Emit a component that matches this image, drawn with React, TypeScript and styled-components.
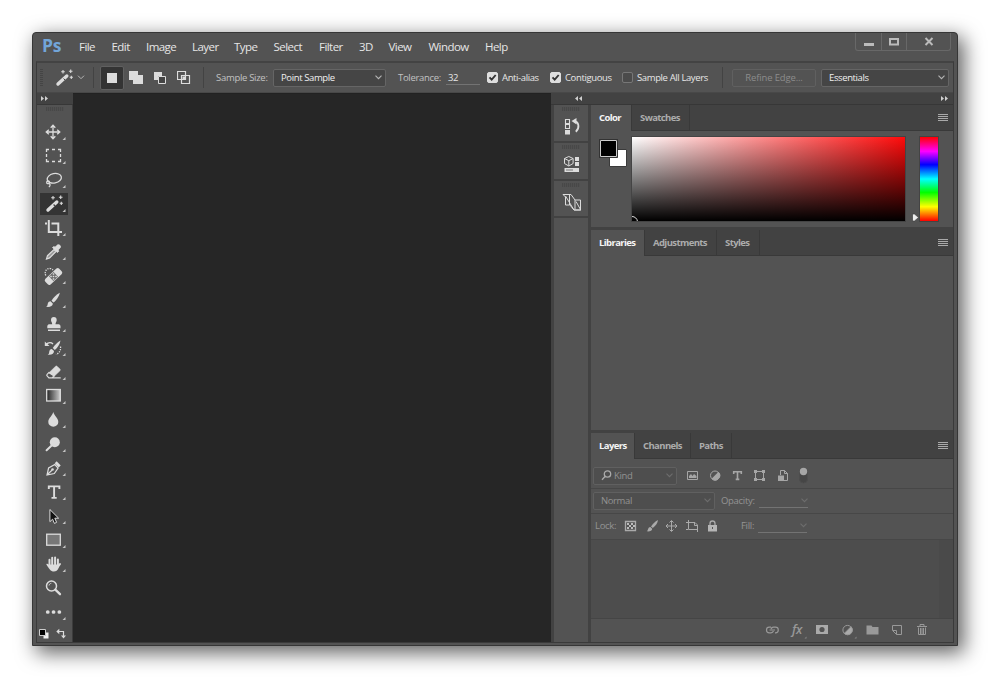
import type { ReactNode } from "react";
import { styled, createGlobalStyle } from "styled-components";

const GlobalStyle = createGlobalStyle`
  * {
    box-sizing: border-box;
  }
  body {
    margin: 0;
    background: #fff;
    font-family: "Open Sans", "Noto Sans", sans-serif;
    font-size: 9.5px;
    font-weight: 500;
    letter-spacing: -0.38px;
    color: #e6e6e6;
    overflow: hidden;
  }
  svg {
    display: block;
    flex: none;
  }
`;

const Page = styled.div`
  width: 990px;
  height: 678px;
  padding: 32px 0 0 32px;
`;

const Window = styled.div`
  display: flex;
  flex-direction: column;
  width: 926px;
  height: 614px;
  padding: 0 3px 2px;
  background: #535353;
  border: 1px solid #363636;
  border-radius: 4px 4px 0 0;
  box-shadow: 5px 6px 20px 1px rgba(0, 0, 0, 0.62);
`;

const MenuBar = styled.div`
  display: flex;
  height: 28px;
  padding-left: 6px;
`;

const Logo = styled.div`
  width: 37px;
  font-size: 17.5px;
  font-weight: 700;
  line-height: 25px;
  letter-spacing: -0.3px;
  color: #72a5d8;
`;

const MenuItem = styled.div<{ $width: number }>`
  width: ${({ $width }) => $width}px;
  font-size: 11.5px;
  line-height: 28px;
  letter-spacing: -0.55px;
  white-space: nowrap;
`;

const WindowButtons = styled.div`
  display: flex;
  height: 18px;
  margin-left: auto;
  margin-right: 3px;
  border: 1px solid #686868;
  border-top: 0;
  border-radius: 0 0 3px 3px;
`;

const WindowButton = styled.div<{ $width: number }>`
  display: flex;
  justify-content: center;
  width: ${({ $width }) => $width}px;
  & + & {
    border-left: 1px solid #686868;
  }
`;

const Frame = styled.div`
  display: flex;
  flex-direction: column;
  flex: 1;
  border: 1px solid #3a3a3a;
  border-top: 2px solid #434343;
`;

const OptionsBar = styled.div`
  display: flex;
  align-items: center;
  height: 30px;
  padding-left: 3px;
  border-bottom: 1px solid #484848;
  white-space: nowrap;
`;

const Grip = styled.div`
  width: 3px;
  height: 18px;
  background: repeating-linear-gradient(#454545 0 1px, #535353 1px 2px);
`;

const Separator = styled.div<{ $left: number }>`
  width: 1px;
  height: 21px;
  margin-left: ${({ $left }) => $left}px;
  background: #434343;
`;

const Gap = styled.div<{ $width: number }>`
  width: ${({ $width }) => $width}px;
`;

const WandPreset = styled.div`
  display: flex;
  align-items: center;
  margin-left: 5px;
  svg + svg {
    margin-left: -3px;
  }
`;

const ModeButton = styled.div<{ $active?: boolean }>`
  display: grid;
  place-items: center;
  width: 24px;
  height: 24px;
  border-radius: 2px;
  border: 1px solid ${({ $active }) => ($active ? "#606060" : "transparent")};
  background: ${({ $active }) => ($active ? "#343434" : "transparent")};
`;

const Label = styled.div<{ $width: number; $dim?: boolean }>`
  width: ${({ $width }) => $width}px;
  letter-spacing: -0.3px;
  color: ${({ $dim }) => ($dim ? "#949494" : "#c2c2c2")};
  white-space: nowrap;
`;

const Select = styled.div<{ $width: number; $dim?: boolean }>`
  display: flex;
  align-items: center;
  justify-content: space-between;
  flex: none;
  width: ${({ $width }) => $width}px;
  height: 18px;
  padding: 0 3px 0 7px;
  border: 1px solid ${({ $dim }) => ($dim ? "#606060" : "#656565")};
  border-radius: 2px;
  background: ${({ $dim }) => ($dim ? "#4e4e4e" : "#454545")};
  color: ${({ $dim }) => ($dim ? "#929292" : "#f0f0f0")};
`;

const FilterKind = styled.span`
  margin-left: 2px;
  margin-right: auto;
`;

const NumberField = styled.div<{ $width: number }>`
  display: flex;
  align-items: center;
  justify-content: flex-end;
  width: ${({ $width }) => $width}px;
  height: 15px;
  border-bottom: 1px solid #737373;
`;

const Value = styled.span`
  margin-right: auto;
  padding-left: 2px;
`;

const Check = styled.div<{ $width: number }>`
  display: flex;
  align-items: center;
  gap: 4px;
  width: ${({ $width }) => $width}px;
`;

const CheckBox = styled.div<{ $checked?: boolean }>`
  flex: none;
  width: 11px;
  height: 11px;
  margin-top: -1px;
  border-radius: 2px;
  border: 1px solid ${({ $checked }) => ($checked ? "#dedede" : "#777")};
  background: ${({ $checked }) => ($checked ? "#dedede" : "#4b4b4b")};
`;

const RefineButton = styled.div`
  width: 84px;
  height: 18px;
  margin-left: 9px;
  margin-right: 5px;
  border: 1px solid #606060;
  border-radius: 2px;
  line-height: 16px;
  letter-spacing: -0.15px;
  text-align: center;
  color: #8c8c8c;
`;

const Workspace = styled.div`
  display: grid;
  grid-template-columns: 36px 478px 1fr;
  flex: 1;
`;

const Column = styled.div`
  display: flex;
  flex-direction: column;
  min-width: 0;
`;

const Canvas = styled.div`
  background: #262626;
  border-top: 1px solid #222;
`;

const CollapseBar = styled.div<{ $pad: string }>`
  display: flex;
  justify-content: space-between;
  align-items: center;
  height: 12px;
  padding: ${({ $pad }) => $pad};
  background: #424242;
  border-bottom: 1px solid #373737;
`;

const ToolBox = styled.div`
  display: flex;
  flex-direction: column;
  flex: 1;
  width: 35px;
  padding-left: 1px;
  box-shadow: 1px 0 0 #3c3c3c;
`;

const DotGrip = styled.div`
  width: 18px;
  height: 4px;
  margin: 2px auto 0;
  background: repeating-linear-gradient(90deg, #484848 0 1px, #505050 1px 2px);
`;

const Tool = styled.div<{ $active?: boolean }>`
  width: 32px;
  height: 24px;
  ${({ $active }) => $active && "background: linear-gradient(#343434, #343434) 2px 1px / 28px 22px no-repeat;"}
`;

const ToolList = styled.div`
  margin-top: 9px;
`;

const Dock = styled.div`
  display: flex;
  flex: 1;
  background: #424242;
`;

const IconStrip = styled.div`
  display: flex;
  flex-direction: column;
  gap: 2px;
  width: 34px;
  margin: 0 3px;
`;

const StripCell = styled.div<{ $height?: number }>`
  height: ${({ $height }) => ($height ? `${$height}px` : "auto")};
  flex: ${({ $height }) => ($height ? "none" : 1)};
  background: #535353;
`;

const Panels = styled.div`
  display: flex;
  flex-direction: column;
  gap: 3px;
  flex: 1;
`;

const Panel = styled.div<{ $height?: number }>`
  display: flex;
  flex-direction: column;
  height: ${({ $height }) => ($height ? `${$height}px` : "auto")};
  flex: ${({ $height }) => ($height ? "none" : 1)};
  background: #535353;
`;

const TabBar = styled.div`
  display: flex;
  align-items: stretch;
  height: 26px;
  background: #424242;
`;

const Tab = styled.div<{ $width: number; $active?: boolean }>`
  width: ${({ $width }) => $width}px;
  padding-left: 8px;
  border-right: 1px solid #393939;
  border-bottom: ${({ $active }) => ($active ? "0" : "1px solid #393939")};
  background: ${({ $active }) => ($active ? "#535353" : "transparent")};
  color: ${({ $active }) => ($active ? "#f5f5f5" : "#acacac")};
  font-weight: 700;
  letter-spacing: -0.6px;
  line-height: 25px;
  white-space: nowrap;
`;

const TabFill = styled.div`
  display: flex;
  justify-content: flex-end;
  align-items: center;
  flex: 1;
  padding-right: 5px;
  border-bottom: 1px solid #393939;
`;

const ColorBody = styled.div`
  display: flex;
  padding: 5px 0 0 8px;
`;

const Swatches = styled.div`
  width: 32px;
  padding-top: 3px;
`;

const ColorField = styled.div`
  width: 275px;
  height: 86px;
  border: 1px solid #444;
  background:
    linear-gradient(to top, #000, transparent),
    linear-gradient(to right, #fff, #ff0b0b);
  overflow: hidden;
`;

const HueSlider = styled.div`
  display: flex;
  align-items: flex-end;
  margin-left: 5px;
`;

const HueBar = styled.div`
  width: 20px;
  height: 86px;
  border: 1px solid #444;
  background: linear-gradient(#f00, #f0f 17%, #00f 33%, #0ff 50%, #0f0 66%, #ff0 83%, #f00);
`;

const Row = styled.div<{ $height: number; $shift: number }>`
  display: flex;
  align-items: center;
  height: ${({ $height }) => $height}px;
  padding-left: 2px;
  padding-top: ${({ $shift }) => Math.max($shift, 0)}px;
  padding-bottom: ${({ $shift }) => Math.max(-$shift, 0)}px;
  border-bottom: 1px solid #474747;
`;

const LayerList = styled.div`
  display: flex;
  justify-content: flex-end;
  flex: 1;
  background: #4d4d4d;
  border-bottom: 1px solid #454545;
`;

const ScrollTrack = styled.div`
  width: 14px;
  background: #4a4a4a;
`;

const PanelFooter = styled.div`
  height: 23px;
`;

const menus: [string, number][] = [
  ["File", 32.5],
  ["Edit", 34.5],
  ["Image", 46],
  ["Layer", 42],
  ["Type", 39.5],
  ["Select", 45.5],
  ["Filter", 40],
  ["3D", 29.5],
  ["View", 40],
  ["Window", 56.5],
  ["Help", 40],
];

const light = "#dcdcdc";
const dim = "#a6a6a6";

const tools: ReactNode[] = [
  // move
  <path d="M15 6v12M9 12h12M12.700 7.800L15 5.200l2.300 2.600M12.700 16.200L15 18.800l2.300-2.600M10.800 9.700L8.200 12l2.600 2.300M19.200 9.700l2.600 2.300-2.600 2.300" />,
  // marquee
  <path d="M8.500 8V5.500H11M14 5.500h3M20 5.500h2.500V8M22.500 10v3M22.500 15v2.500H20M17 17.500h-3M11 17.500H8.500V15M8.500 13v-3" />,
  // lasso
  <>
    <ellipse cx="16.300" cy="10.300" rx="7.200" ry="4.700" transform="rotate(-12 16.300 10.300)" />
    <path d="M10 13c-2 .5-1.600 3 .3 2.600 2-.4 1.500-2.600-.3-2.600M11.300 15.500c1.200 1 1 2.500-.5 3.500" />
  </>,
  // magic wand
  <>
    <path d="M10 18L18.800 10" strokeWidth="3.400" strokeLinecap="round" />
    <path d="M15.600 12.500l1.500 1.600" stroke="#444" />
    <path d="M15 4v3.600M13.200 5.800h3.600M22.700 3.500v3.600M20.900 5.300h3.600M23.300 9.700v3.200M21.700 11.300h3.200" strokeWidth="1.100" />
  </>,
  // crop
  <path d="M7 7.500h2M10.800 4v12H24M13.500 7.500h6.800V20" strokeWidth="2" />,
  // eyedropper
  <>
    <path d="M8.500 19l1-3.300 6.500-6.200 2 2-6.400 6.400z" fill="#999" strokeWidth="1.200" />
    <path d="M14.500 7.500l1.500-1 1 .8 2-2c1.200-1 3-.4 3.400.8.300.8 0 1.700-.6 2.200L20 10l.8 1.200-1.400 1.400z" fill={light} strokeWidth=".8" />
  </>,
  // healing brush
  <>
    <rect x="6" y="8.700" width="19" height="7.600" rx="2" fill={light} stroke="none" transform="rotate(-43 15.500 12.500)" />
    <rect x="12.300" y="9.300" width="6.400" height="6.400" fill="#666" stroke="none" transform="rotate(-43 15.500 12.500)" />
    <path d="M15.500 9.200v1.600M15.500 14.200v1.600M12.200 12.500h1.600M17.200 12.500h1.600M14.700 12.500h1.600" strokeWidth="1.600" />
    <path d="M7.800 11.500C6 8 8.500 4 12 4.500c1.500 0 2.500.8 3 1.500" strokeDasharray="1.300 1.100" />
  </>,
  // brush
  <>
    <path d="M21.800 4.700c-3 1.600-6.800 5.200-8.300 8l2 1.900c2.600-2 5.800-6.500 6.300-9.900z" fill={light} stroke="none" />
    <path d="M12.500 13.300l2.300 2.200c.2 2.700-3 3.900-6.800 3.300 1.900-.8 1.400-2.300 2-3.800.4-1 1.400-1.700 2.500-1.700z" fill={light} stroke="none" />
  </>,
  // stamp
  <path
    d="M15.800 5a3 3 0 0 1 2.900 3c0 1.800-1.200 2.400-1.200 4.200h3.700l1.300 1.500v2.600H9.300v-2.600l1.300-1.500h3.600c0-1.800-1.200-2.400-1.200-4.200a3 3 0 0 1 2.800-3zM10 17.500h12v1.600H10z"
    fill={light}
    stroke="none"
  />,
  // history brush
  <>
    <path d="M22.500 4.500c-3 1.600-6.300 5-7.700 7.600l2 1.900c2.600-2 5.200-6.100 5.700-9.500z" fill={light} stroke="none" />
    <path d="M13.800 12.900l2.200 2.200c.2 2.700-2.500 4.200-6.300 3.600 1.900-.8 1.200-2.600 1.800-4 .4-1 1.200-1.800 2.300-1.800z" fill={light} stroke="none" />
    <path d="M8 8.500c2.500-2.500 5.500-2 7-.5" />
    <path d="M6.800 5.500V10h4.700z" fill={light} stroke="none" />
    <path d="M22.500 10.500c.5 3.500-1 6.500-4.500 8" strokeDasharray="1.300 1.100" />
  </>,
  // eraser
  <>
    <path d="M11 12.700l6.500-6.300c.6-.5 1.200-.5 1.700 0l2.700 2.700c.5.600.5 1.100 0 1.700l-5.500 5.200z" fill={light} strokeWidth=".6" />
    <path d="M10.800 12.600l-1.700 1.800c-.5.500-.5 1 0 1.500l1.800 1.900h3.300l2-1.900zM13 17.900h9.700" strokeWidth="1.200" />
  </>,
  // gradient
  <rect x="8.700" y="5.500" width="13.600" height="11.500" fill="url(#toolGradient)" strokeWidth="1.300" />,
  // blur
  <path d="M15.300 4c.8 3.400 5 6.400 5 9.900a5 4.900 0 0 1-10 0c0-3.500 4.200-6.500 5-9.900z" fill={light} stroke="none" />,
  // dodge
  <>
    <circle cx="16.800" cy="10.300" r="5" fill={light} stroke="none" />
    <path d="M8.600 18.300l5-4.700" strokeWidth="2" strokeLinecap="round" />
  </>,
  // pen
  <>
    <path d="M9 19l1.600-7 6.200-3.500 3.300 3.500-3.800 5.500zM9.200 18.800l4.700-4.600" strokeWidth="1.200" />
    <circle cx="14.500" cy="13.500" r="1.300" fill={light} stroke="none" />
    <path d="M16.700 7.300l2-2 4 4.200-2 2z" fill={light} stroke="none" />
  </>,
  // type
  <path d="M10.800 9V6.400h10.600V9M16.100 6.500v11.300M13.500 17.900h5.200" strokeWidth="1.900" />,
  // path selection
  <path d="M11.900 5.500v12.200l2.700-2.500 1.800 4.200 2.200-1-1.800-4.200h3.800z" fill="#111" strokeWidth="1" />,
  // rectangle
  <rect x="8.700" y="6.200" width="13.600" height="11" fill="#777" strokeWidth="1.300" />,
  // hand
  <>
    <path d="M11.500 14V7.700M14.200 12.500V5.700M17.100 12.500V5.500M19.900 14V7.500" strokeWidth="2" strokeLinecap="round" />
    <path d="M8.300 12.200c.7-.8 1.600-.5 2.200.4l.7-.1h9.800c0 4-1.500 7-5 7s-4.900-2.700-7.700-7.300z" fill={light} stroke="none" />
    <path d="M19.500 15.500l2.500-3.500" strokeWidth="2" strokeLinecap="round" />
  </>,
  // zoom
  <>
    <circle cx="13.500" cy="10" r="5" strokeWidth="1.500" />
    <path d="M17.300 13.700l4.700 4.500" strokeWidth="2.300" strokeLinecap="round" />
    <path d="M11 9.500c.3-1.200 1-2 2.300-2.200" strokeWidth=".9" />
  </>,
  // more
  <path d="M9.700 12h.1M15.500 12h.1M21.300 12h.1" strokeWidth="3.700" strokeLinecap="round" />,
];

function Chevron({ color = "#b5b5b5" }: { color?: string }) {
  return (
    <svg width="7" height="5" fill="none" stroke={color} strokeWidth="1.100">
      <path d="M.5 .7l3 3 3-3" />
    </svg>
  );
}

function Arrows({ left }: { left?: boolean }) {
  return (
    <svg width="7" height="5" fill="#d0d0d0">
      {left ? <path d="M3 0v5L0 2.500zM7 0v5L4 2.500z" /> : <path d="M0 0v5l3-2.500zM4 0v5l3-2.500z" />}
    </svg>
  );
}

function Tabs({ items }: { items: [string, number][] }) {
  return (
    <TabBar>
      {items.map(([name, width], index) => (
        <Tab key={name} $width={width} $active={index === 0}>
          {name}
        </Tab>
      ))}
      <TabFill>
        <svg width="10" height="8" stroke="#aaa">
          <path d="M0 .5h10M0 2.500h10M0 4.500h10M0 6.500h10" />
        </svg>
      </TabFill>
    </TabBar>
  );
}

function CheckOption({ text, width, checked }: { text: string; width: number; checked?: boolean }) {
  return (
    <Check $width={width}>
      <CheckBox $checked={checked}>
        {checked && (
          <svg width="9" height="9" fill="none" stroke="#333" strokeWidth="1.900">
            <path d="M1.500 4.300l2.200 2.300 4-4.600" />
          </svg>
        )}
      </CheckBox>
      {text}
    </Check>
  );
}

function Toolbar() {
  return (
    <OptionsBar>
      <Grip />
      <WandPreset>
        <svg width="32" height="24" viewBox="0 0 32 24" fill="none" stroke={light}>
          {tools[3]}
        </svg>
        <svg width="8" height="5" fill="none" stroke="#b5b5b5">
          <path d="M1 .7l3 3 3-3" />
        </svg>
      </WandPreset>
      <Separator $left={8} />
      <Gap $width={6} />
      <ModeButton $active>
        <svg width="10" height="10">
          <path fill={light} d="M0 0h10v10H0z" />
        </svg>
      </ModeButton>
      <ModeButton>
        <svg width="14" height="13" fill={light}>
          <path d="M0 0h9v4h5v9H4V9H0z" />
        </svg>
      </ModeButton>
      <ModeButton>
        <svg width="12" height="12" fill="none" stroke={light}>
          <path d="M0 0h8v4H4v4H0z" fill={light} stroke="none" />
          <path d="M4.500 4.500h7v7h-7z" fill="#444" />
        </svg>
      </ModeButton>
      <ModeButton>
        <svg width="14" height="13" fill="none" stroke={light}>
          <path d="M.5 .5h8v8h-8zM4.500 4.500h8v8h-8z" strokeWidth="1.200" />
          <path d="M5.500 5.500h3v3h-3z" fill={light} stroke="none" />
        </svg>
      </ModeButton>
      <Separator $left={7} />
      <Gap $width={12} />
      <Label $width={57}>Sample Size:</Label>
      <Select $width={113}>
        Point Sample
        <Chevron />
      </Select>
      <Gap $width={12} />
      <Label $width={48}>Tolerance:</Label>
      <NumberField $width={34}>
        <Value>32</Value>
      </NumberField>
      <Gap $width={7} />
      <CheckOption text="Anti-alias" width={63} checked />
      <CheckOption text="Contiguous" width={72} checked />
      <CheckOption text="Sample All Layers" width={100} />
      <Separator $left={0} />
      <RefineButton>Refine Edge...</RefineButton>
      <Select $width={128}>
        Essentials
        <Chevron />
      </Select>
    </OptionsBar>
  );
}

function ToolPalette() {
  return (
    <Column>
      <CollapseBar $pad="0 0 0 4px">
        <Arrows />
      </CollapseBar>
      <ToolBox>
        <DotGrip />
        <ToolList>
          {tools.map((icon, index) => (
            <Tool key={index} $active={index === 3}>
              <svg width="32" height="24" viewBox="0 0 32 24" fill="none" stroke={light} strokeWidth="1.300">
                <defs>
                  <linearGradient id="toolGradient">
                    <stop stopColor="#222" />
                    <stop offset="1" stopColor="#ccc" />
                  </linearGradient>
                </defs>
                {icon}
                {index !== 19 && <path d="M27.500 17v3h-3z" fill="#c4c4c4" stroke="none" />}
              </svg>
            </Tool>
          ))}
        </ToolList>
        <svg width="32" height="17" fill="none">
          <path d="M5.500 8.500h5v6h-5z" fill="#eee" />
          <path d="M1.500 5.500h6v6h-6z" fill="#000" stroke="#ccc" />
          <path d="M21 7.500h4.500v5" stroke={light} strokeWidth="1.200" />
          <path d="M18.300 7.500l3-2.700v5.400zM23 11.500h5l-2.500 3z" fill={light} />
        </svg>
      </ToolBox>
    </Column>
  );
}

function Strip() {
  return (
    <IconStrip>
      <StripCell $height={36}>
        <DotGrip />
        <svg width="34" height="30" fill="none" stroke={light}>
          <path d="M11.500 8.500h4v4h-4zM11.500 13.500h4v4h-4z" strokeWidth="1.100" />
          <path d="M11 19h5v4.500h-5z" fill={light} stroke="none" />
          <path d="M20 10.500c5 0 6 6.500 1.800 10.200" strokeWidth="1.800" />
          <path d="M17.500 10L22.500 7v6.500z" fill={light} stroke="none" />
        </svg>
      </StripCell>
      <StripCell $height={36}>
        <DotGrip />
        <svg width="34" height="30" fill="none" stroke={light}>
          <path d="M10.500 9.500l4.300-2 4.300 2v5l-4.300 2.500-4.300-2.500zM10.500 9.500l4.300 2.200 4.300-2.200M14.800 11.700v5" />
          <path d="M21 8h4v4h-4zM21 13h4v4h-4zM10.500 19h14.500v4H10.500z" fill={light} stroke="none" />
          <path d="M12 21h7" stroke="#777" />
        </svg>
      </StripCell>
      <StripCell $height={35}>
        <DotGrip />
        <svg width="34" height="30" fill="none" stroke={light}>
          <path d="M9 7.500h8l4 5.500M9 7.500l2.500 2.500v8h4v-9.500M15.500 8v9.500M11.500 9l8.500 14h6.500V13h-5.500v9.500M22 14.500l4.500 8M15.500 17.500l4.500 5.500h7" strokeWidth="1" />
        </svg>
      </StripCell>
      <StripCell />
    </IconStrip>
  );
}

function ColorPanel() {
  return (
    <Panel $height={122}>
      <Tabs items={[["Color", 41], ["Swatches", 58]]} />
      <ColorBody>
        <Swatches>
          <svg width="29" height="30" fill="none">
            <path d="M10.500 10.500h17v17h-17z" fill="#fff" stroke="#3a3a3a" />
            <path d="M.5 .5h18v18H.5z" fill="#000" stroke="#333" />
            <path d="M1.500 1.500h16v16h-16z" stroke="#ccc" />
          </svg>
        </Swatches>
        <ColorField>
          <svg width="275" height="84" fill="none" stroke="#ddd">
            <path d="M0 79.500a5.500 5.500 0 0 1 5.500 5" />
          </svg>
        </ColorField>
        <HueSlider>
          <svg width="8" height="9">
            <path d="M1.500 1h2l4 3.500-4 3.500h-2z" fill="#eee" stroke="#444" strokeWidth=".7" />
          </svg>
          <HueBar />
        </HueSlider>
      </ColorBody>
    </Panel>
  );
}

function LayersPanel() {
  return (
    <Panel>
      <Tabs items={[["Layers", 44], ["Channels", 56], ["Paths", 41]]} />
      <Row $height={30} $shift={4}>
        <Select $width={84} $dim>
          <svg width="11" height="11" fill="none" stroke="#aaa" strokeWidth="1.300">
            <circle cx="6.500" cy="4" r="3.200" />
            <path d="M4.300 6.300L1 9.800" />
          </svg>
          <FilterKind>Kind</FilterKind>
          <Chevron color="#6d6d6d" />
        </Select>
        <svg width="136" height="26" fill="none" stroke={dim}>
          <path d="M10.500 8.500h10v8h-10z" />
          <path d="M12 15v-2l2-2 1.500 2 1.500-2 2.500 2v2z" fill={dim} stroke="none" />
          <circle cx="38" cy="12.500" r="4.500" />
          <path d="M41.500 9.300a4.600 4.600 0 0 1-6.500 6.500z" fill={dim} />
          <path d="M56.700 11V8.700h7.600V11M60.500 9v7.500M58.700 16.400h3.600" strokeWidth="1.600" />
          <path d="M78.500 8.500h8v8h-8z" />
          <path d="M77 7h3v3h-3zM85 7h3v3h-3zM77 15h3v3h-3zM85 15h3v3h-3z" fill={dim} stroke="none" />
          <path d="M103.500 12V7.500h4l3 3v7H107M107.500 7.500v3h3" />
          <path d="M101 12.500h6v5.500h-6z" fill={dim} stroke="none" />
          <rect x="122.500" y="5" width="8" height="15" rx="4" fill="#464646" stroke="#4d4d4d" />
          <circle cx="126.500" cy="8.500" r="3.700" fill={dim} stroke="none" />
        </svg>
      </Row>
      <Row $height={25} $shift={-1}>
        <Select $width={122} $dim>
          Normal
          <Chevron color="#6d6d6d" />
        </Select>
        <Gap $width={6} />
        <Label $width={38} $dim>
          Opacity:
        </Label>
        <NumberField $width={49}>
          <Chevron color="#6d6d6d" />
        </NumberField>
      </Row>
      <Row $height={26} $shift={-2}>
        <Gap $width={2} />
        <Label $width={29} $dim>
          Lock:
        </Label>
        <svg width="117" height="24" fill="none" stroke="#aaa">
          <path d="M1.500 7.500h10v9h-10z" strokeWidth="1.300" />
          <path d="M3 9h2v2H3zM7 9h2v2H7zM5 11h2v2H5zM9 11h2v2H9zM3 13h2v2H3zM7 13h2v2H7z" fill="#bbb" stroke="none" />
          <path d="M34 6c-3 1.500-5.500 4-7 6.500l1.800 1.500C31.500 12 33.700 9 34 6zM26.400 13l1.800 1.700c0 2.300-2.700 3-5.600 2.600 2-.8 1-4.300 3.800-4.300z" fill="#aaa" stroke="none" />
          <path d="M47.500 7v10M42.500 12h10M45.500 8.500l2-2 2 2M45.500 15.500l2 2 2-2M44 10l-2 2 2 2M51 10l2 2-2 2" />
          <path d="M62 8.500h9l2.500 2.500v7M64.500 6v9.500H74M70.500 8.500v3h3M62 15.500h2" />
          <path d="M84 11h9v6.500h-9z" fill="#b5b5b5" stroke="none" />
          <path d="M86 11V9.500a2.500 2.500 0 0 1 5 0V11" strokeWidth="1.300" />
          <path d="M88.500 13v2" stroke="#555" />
        </svg>
        <Label $width={17} $dim>
          Fill:
        </Label>
        <NumberField $width={49}>
          <Chevron color="#6d6d6d" />
        </NumberField>
      </Row>
      <LayerList>
        <ScrollTrack />
      </LayerList>
      <PanelFooter>
        <svg width="362" height="22" fill="none" stroke="#999">
          <path d="M180 8.200h-1.700a2.800 2.800 0 0 0 0 5.600H180a2.800 2.800 0 0 0 2.500-1.800M180 10a2.800 2.800 0 0 1 2.500-1.800h2a2.800 2.800 0 0 1 0 5.600H184M178.500 11h5.500" strokeWidth="1.200" />
          <text x="201" y="14.500" fontStyle="italic" fontSize="12.500" fontWeight="600" fill="#999" stroke="none">
            fx
          </text>
          <path d="M225 6h12v9h-12z" fill="#aaa" stroke="none" />
          <circle cx="231" cy="10.500" r="2.600" fill="#535353" stroke="none" />
          <circle cx="256.500" cy="11" r="4.600" />
          <path d="M260 7.700a4.700 4.700 0 0 1-6.700 6.700z" fill="#aaa" />
          <path d="M275.500 6.500h5l1 1.500h6v7.500h-12z" fill="#999" stroke="none" />
          <path d="M301.500 11V6.500h9v9h-5l-4-4h4v4" />
          <path d="M326 7.500h10M329 7V5.500h4V7M327.500 8.500v7h7v-7M329.500 9v6M331 9v6M332.500 9v6" />
          <path d="M215.500 17.500v2h-2zM265.500 17.500v2h-2z" fill="#888" stroke="none" />
        </svg>
      </PanelFooter>
    </Panel>
  );
}

export default function App() {
  return (
    <Page>
      <GlobalStyle />
      <Window>
        <MenuBar>
          <Logo>Ps</Logo>
          {menus.map(([name, width]) => (
            <MenuItem key={name} $width={width}>
              {name}
            </MenuItem>
          ))}
          <WindowButtons>
            <WindowButton $width={25}>
              <svg width="10" height="17">
                <path d="M0 10h10v3H0z" fill="#bbb" />
              </svg>
            </WindowButton>
            <WindowButton $width={25}>
              <svg width="10" height="17" fill="none">
                <path d="M1 6h8v5.500H1z" stroke="#bbb" strokeWidth="2" />
              </svg>
            </WindowButton>
            <WindowButton $width={44}>
              <svg width="10" height="17" fill="none">
                <path d="M1.500 5l7 7M8.500 5l-7 7" stroke="#bbb" strokeWidth="2" />
              </svg>
            </WindowButton>
          </WindowButtons>
        </MenuBar>
        <Frame>
          <Toolbar />
          <Workspace>
            <ToolPalette />
            <Canvas />
            <Column>
              <CollapseBar $pad="0 5px 0 24px">
                <Arrows left />
                <Arrows />
              </CollapseBar>
              <Dock>
                <Strip />
                <Panels>
                  <ColorPanel />
                  <Panel $height={200}>
                    <Tabs items={[["Libraries", 54], ["Adjustments", 72], ["Styles", 43]]} />
                  </Panel>
                  <LayersPanel />
                </Panels>
              </Dock>
            </Column>
          </Workspace>
        </Frame>
      </Window>
    </Page>
  );
}
